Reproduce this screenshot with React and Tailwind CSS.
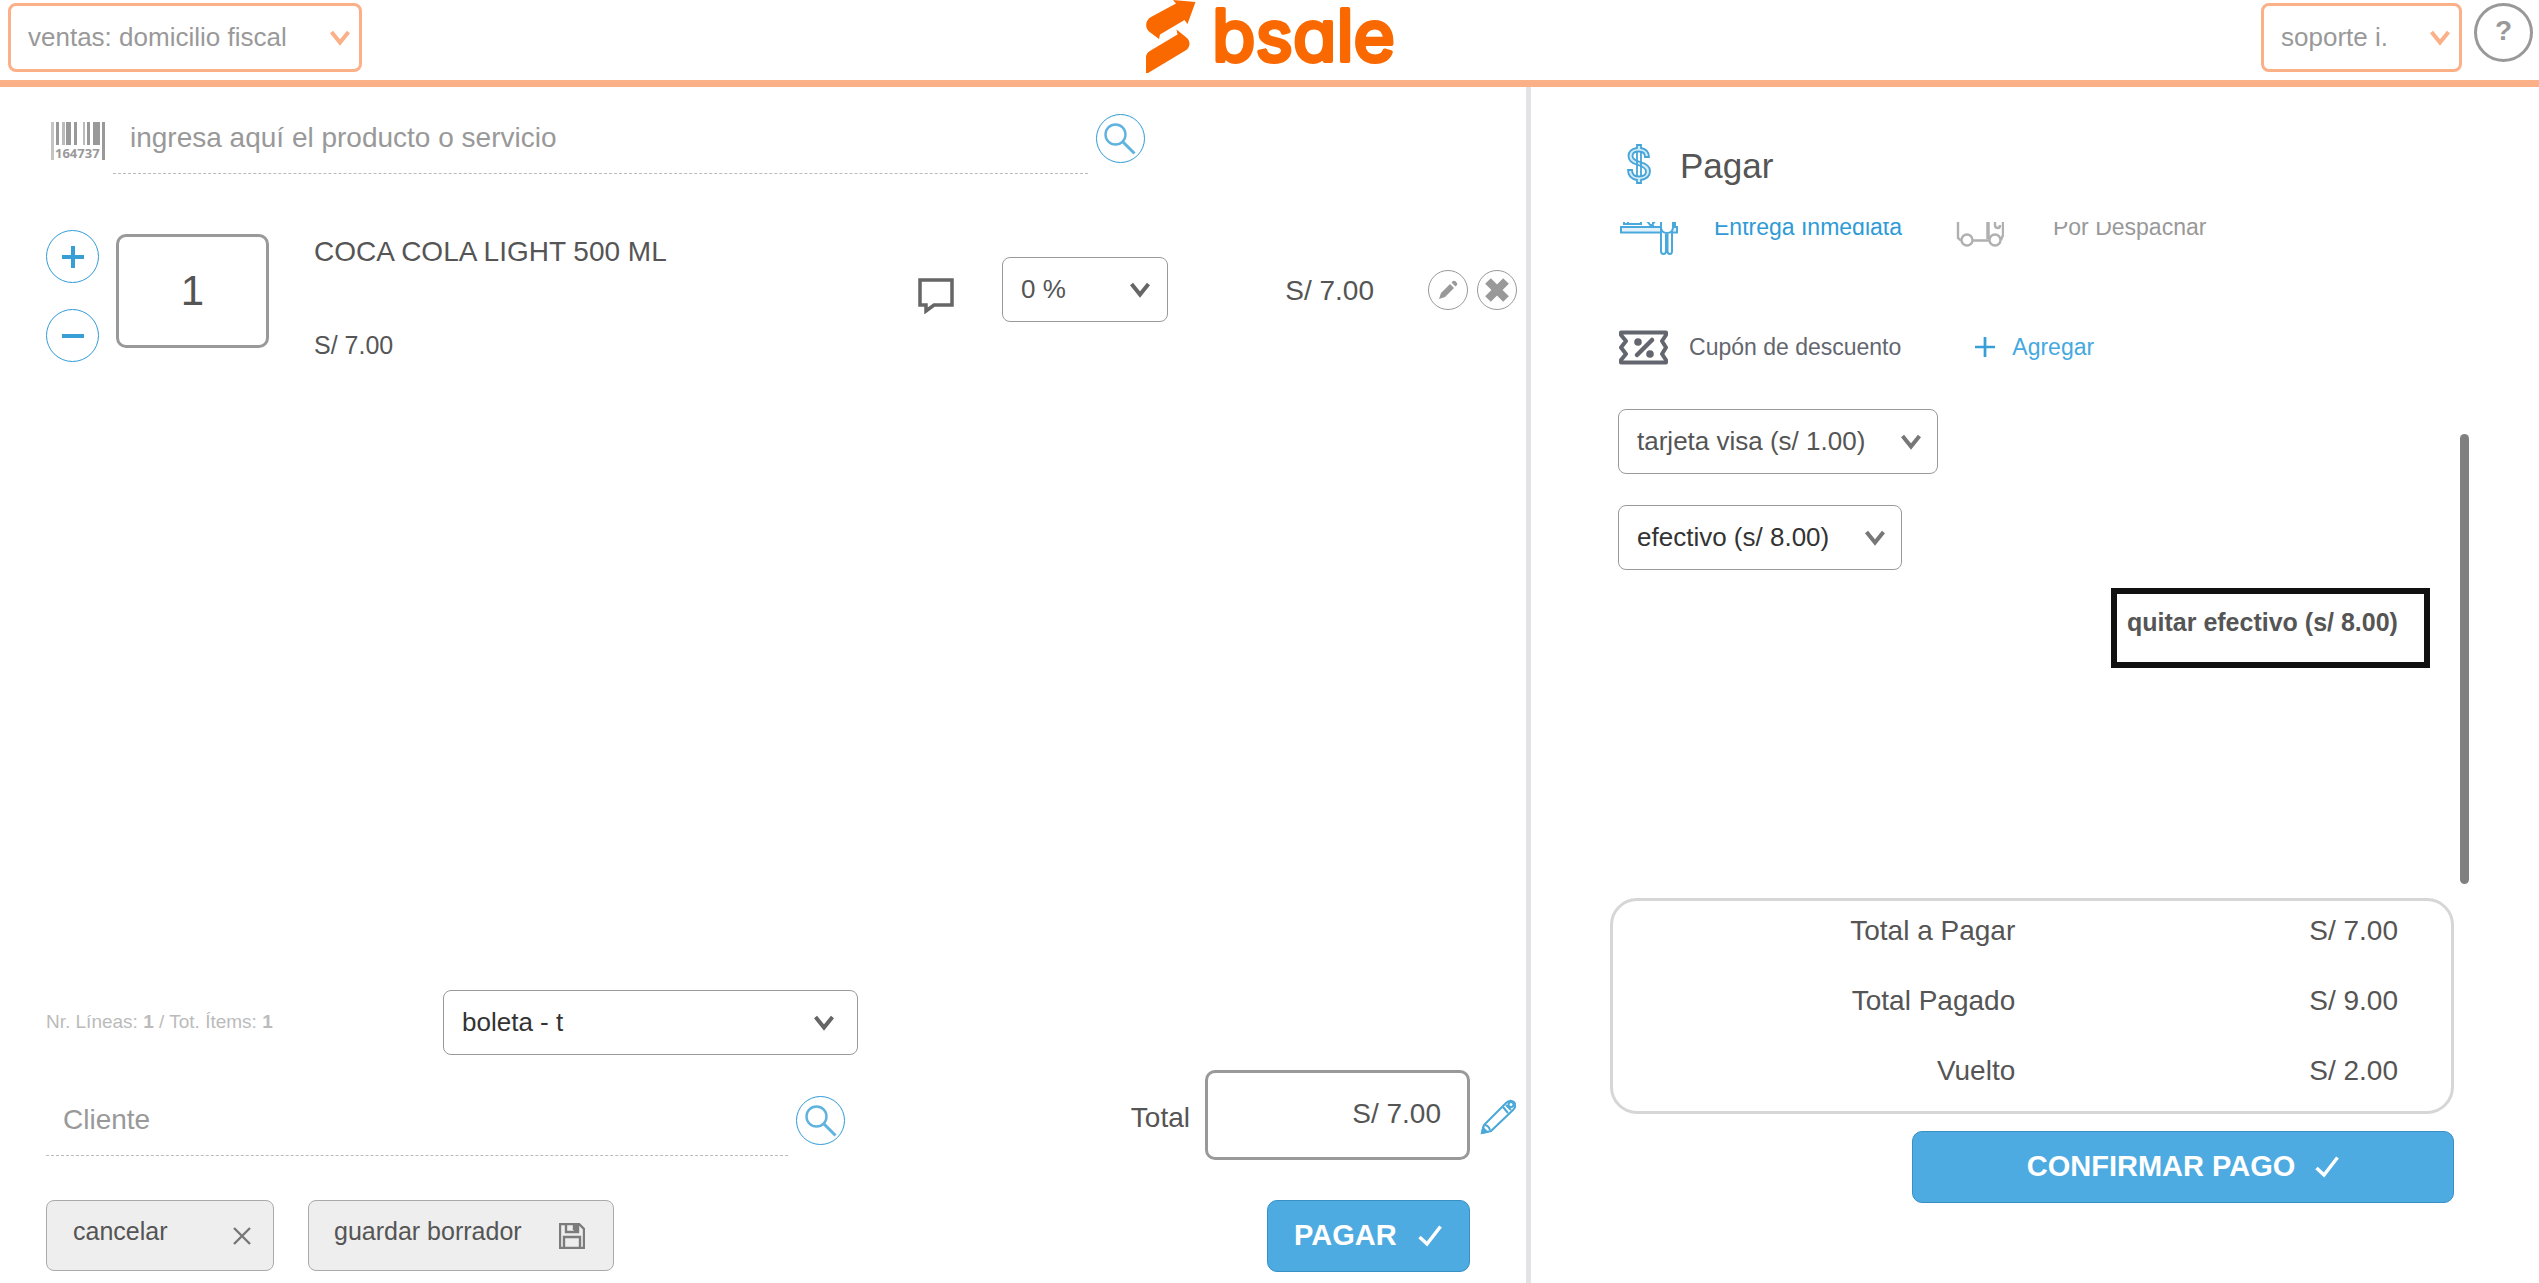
import React, { useState } from 'react';

// Logo
const Logo = () => (
  <svg width="248" height="80" viewBox="0 0 248 80" role="img" aria-label="bsale" fill="#fa6800" className="overflow-visible">
    <path d="M27 0 L49.500 2 L41.500 24 L38.500 20 L14 34.500 L13 39 L3 31.500 C-1.500 27 -0.500 20 5 17 L30 3.500 Z" />
    <path d="M30.500 29.500 L41 38 C45 42 44 48 39.500 50.500 L2 73 H0 V58 C0 54 2 52 5.500 50 L31.500 34.500 Z" />
    <text
      x="66"
      y="61"
      stroke="#fa6800"
      strokeWidth="4"
      strokeLinejoin="round"
      className="text-[71px] font-normal font-['Inter',sans-serif] [font-feature-settings:'cv11']"
    >
      bsale
    </text>
  </svg>
);

// Icons
const Chevron = ({ className }) => (
  <svg width="20" height="16" viewBox="0 0 20 16" fill="none" stroke="currentColor" strokeWidth="4" className={className}>
    <path d="M1.500 2 L10 12.500 L18.500 2" />
  </svg>
);

const SearchIcon = () => (
  <svg width="32" height="32" viewBox="0 0 32 32" fill="none" stroke="#5fb3df" strokeWidth="2.400">
    <circle cx="11.500" cy="11.500" r="10" />
    <path d="M18.500 18.500 L30.500 30.500" strokeWidth="3" />
  </svg>
);

const BarcodeIcon = () => (
  <svg width="54" height="42" viewBox="0 0 54 42" fill="#999" className="mt-2 shrink-0">
    <rect x="0" y="0" width="3" height="38" fill="#c4c4c4" />
    <rect x="5" y="0" width="3" height="23" />
    <rect x="11" y="0" width="3" height="23" fill="#bbb" />
    <rect x="15" y="0" width="5" height="23" />
    <rect x="23" y="0" width="3" height="23" />
    <rect x="32" y="0" width="2" height="23" fill="#bbb" />
    <rect x="36" y="0" width="3" height="23" />
    <rect x="42" y="0" width="7" height="23" />
    <rect x="51" y="0" width="3" height="38" />
    <text x="4" y="36" className="text-[13px] font-bold font-['Open_Sans',sans-serif]">164737</text>
  </svg>
);

const CommentIcon = () => (
  <svg width="36" height="36" viewBox="0 0 36 36" fill="none" stroke="#666" strokeWidth="3.500">
    <path d="M2 2 H34 V27 H16 L8 33 V27 H2 Z" />
  </svg>
);

const CheckIcon = () => (
  <svg width="24" height="22" viewBox="0 0 24 22" fill="none" stroke="#fff" strokeWidth="3.500">
    <path d="M1.500 12 L9 19 L22.500 1.500" />
  </svg>
);

const SmallPencil = () => (
  <svg width="20" height="20" viewBox="0 0 20 20" fill="#999">
    <path d="M1 19 L3 13 L12 4 L16 8 L7 17 Z M13.500 2.500 L15 1 Q17 0 19 3 Q19.500 4 19 5 L17.500 6.500 Z" />
  </svg>
);

const CrossIcon = () => (
  <svg width="24" height="24" viewBox="0 0 24 24" fill="none" stroke="#999" strokeWidth="8">
    <path d="M3 3 L21 21 M21 3 L3 21" />
  </svg>
);

const PencilIcon = () => (
  <svg width="36" height="36" viewBox="0 0 36 36" fill="none" stroke="#4aa8d8" strokeWidth="2">
    <path d="M2 34 L4 26 L26 4 Q30 0 34 3 Q37 7 33 11 L11 32 Z" />
    <path d="M5 26 Q9 27 10 31 M23 8 L28 14 M26 6 L31 11" />
    <circle cx="31" cy="5.500" r="2.500" />
    <path d="M2 34 L3 29 L7 33 Z" fill="#4aa8d8" />
  </svg>
);

const CloseIcon = () => (
  <svg width="18" height="18" viewBox="0 0 18 18" fill="none" stroke="#777" strokeWidth="2.400">
    <path d="M1 1 L17 17 M17 1 L1 17" />
  </svg>
);

const SaveIcon = () => (
  <svg width="26" height="26" viewBox="0 0 26 26" fill="none" stroke="#7c7c7c" strokeWidth="2.400">
    <path d="M1 1 H20 L25 6 V25 H1 Z" />
    <path d="M7 1 V9 H19 V1 M15 2 V7 M5 25 V14 H21 V25" />
    <path d="M16 2 H18 V7 H16 Z" fill="#7c7c7c" />
  </svg>
);

const DollarIcon = () => (
  <svg width="24" height="40" viewBox="0 0 24 40" fill="#d3eaf7" stroke="#45a5d8" strokeWidth="1.800">
    <path d="M10 4 V1 H14 V4 C19 5 22 8 22 13 H18 C18 9 15.500 7.500 12 7.500 C8 7.500 5.500 9 5.500 12 C5.500 15 8 16.500 13 18 C19 19.500 23 22 23 27 C23 32 19.500 35 14 36 V39 H10 V36 C4 35 1 32 1 26 H5 C5 31 8 32.500 12 32.500 C16 32.500 19 31 19 27.500 C19 24 16 22.500 11 21 C5 19.500 1.500 17 1.500 12 C1.500 7.500 5 4.500 10 4 Z" />
    <path d="M10 8 V32 M14 8 V32" />
  </svg>
);

const DeliveryIcon = () => (
  <svg width="58" height="60" viewBox="0 0 58 60" fill="none" stroke="#4aa9dc" strokeWidth="2">
    <path d="M1 30 H41 V35.500 H1 Z M53 30 H57 V35.500 H53" fill="#e3f2fa" />
    <path d="M4 10 V27 H10 M8 24 V27 H21 V10 M27 24 L31 29 L37 22 M33 24 V29" />
    <path d="M41 20 V30 Q41 36 47 36 Q53 36 53 30 V20 M55 20 V29" />
    <path d="M41 34 V54 Q41 57 43.500 57 Q46 57 46 54 V37 M47.500 37 V54 Q47.500 57 50 57 Q52 57 52 54 V34" />
  </svg>
);

const TruckIcon = () => (
  <svg width="48" height="60" viewBox="0 0 48 60" fill="none" stroke="#b0b0b0" strokeWidth="2.400">
    <path d="M2 8 V41 L5 43.500 M17 43.500 H34 M45 43 L47 38 V8" />
    <path d="M32 8 V42" strokeWidth="3.500" />
    <path d="M39 10 V28 Q39 31 42 31 Q44 31 44 28" />
    <circle cx="11" cy="43" r="5.500" />
    <circle cx="39" cy="43" r="5.500" />
  </svg>
);

const CouponIcon = () => (
  <svg width="50" height="35" viewBox="0 0 50 35" fill="none" stroke="#63666f" strokeWidth="4">
    <path d="M2 2.500 H47 V5 L43 11 L47 17.500 L43 24 L47 30 V32.500 H2 V30 L7 24 L2 17.500 L7 11 L2 5 Z" strokeLinejoin="round" />
    <path d="M18 25 L33 10" strokeWidth="4.500" strokeLinecap="round" />
    <circle cx="19" cy="12" r="3.800" fill="#63666f" stroke="none" />
    <circle cx="31" cy="24" r="3.800" fill="#63666f" stroke="none" />
  </svg>
);

const PlusIcon = ({ size, stroke }) => (
  <svg width={size} height={size} viewBox="0 0 22 22" fill="none" stroke="#379fd6" strokeWidth={stroke}>
    <path d="M11 0 V22 M0 11 H22" />
  </svg>
);

// Select with its own arrow
const Select = ({ label, options, className, arrow }) => (
  <div className="relative">
    <select
      aria-label={label}
      className={`appearance-none rounded-lg bg-white text-[26px] outline-none ${className}`}
    >
      {options.map((option) => (
        <option key={option}>{option}</option>
      ))}
    </select>
    <Chevron className={`pointer-events-none absolute top-1/2 -translate-y-1/2 ${arrow}`} />
  </div>
);

const SearchButton = ({ label }) => (
  <button
    aria-label={label}
    className="flex size-[49px] shrink-0 items-center justify-center rounded-full border border-[#2f9bd6]"
  >
    <SearchIcon />
  </button>
);

const Header = () => (
  <header className="grid h-[87px] grid-cols-[1fr_auto_1fr] items-start border-b-[7px] border-[#fbb088]">
    <div className="flex pt-[3px] pl-2">
      <Select
        label="Sucursal"
        options={['ventas: domicilio fiscal']}
        className="h-[69px] w-[354px] border-3 border-[#fbb088] pr-10 pl-[17px] text-[#999]"
        arrow="right-3 text-[#fbb088]"
      />
    </div>
    <Logo />
    <div className="flex justify-end gap-3 pt-[3px] pr-[6px]">
      <Select
        label="Usuario"
        options={['soporte i.']}
        className="h-[69px] w-[201px] border-3 border-[#fbb088] pr-10 pl-[17px] text-[#999]"
        arrow="right-3 text-[#fbb088]"
      />
      <button className="size-[59px] rounded-full border-3 border-[#999] pb-1 text-[28px] leading-none font-bold text-[#999]">
        ?
      </button>
    </div>
  </header>
);

const ItemRow = ({ item }) => {
  const [qty, setQty] = useState(item.qty);

  return (
    <div className="mt-14 flex items-start pr-[9px] pl-[46px]">
      {/* Quantity */}
      <div className="flex flex-col gap-[26px]">
        <button
          aria-label="Agregar uno"
          onClick={() => setQty(qty + 1)}
          className="flex size-[53px] items-center justify-center rounded-full border border-[#2f9bd6]"
        >
          <PlusIcon size={22} stroke={4} />
        </button>
        <button
          aria-label="Quitar uno"
          onClick={() => setQty(Math.max(1, qty - 1))}
          className="flex size-[53px] items-center justify-center rounded-full border border-[#2f9bd6]"
        >
          <span className="h-1 w-[22px] bg-[#379fd6]" />
        </button>
      </div>
      <input
        aria-label="Cantidad"
        value={qty}
        onChange={(e) => setQty(Number(e.target.value) || 1)}
        className="mt-1 ml-[17px] h-[114px] w-[153px] rounded-[10px] border-3 border-[#999] text-center text-[42px] outline-none"
      />

      {/* Name and unit price */}
      <div className="ml-[45px] flex h-[131px] flex-1 flex-col justify-between">
        <p className="text-[28px] leading-[44px]">{item.name}</p>
        <p className="text-[25px] leading-8">{item.price}</p>
      </div>

      {/* Discount, total and actions */}
      <div className="flex h-[119px] items-center">
        <button aria-label="Comentario" className="mt-3 mr-12">
          <CommentIcon />
        </button>
        <Select
          label="Descuento"
          options={['0 %']}
          className="h-[65px] w-[166px] border border-[#999] pr-10 pl-[18px]"
          arrow="right-[18px] text-[#666]"
        />
        <span className="w-[206px] pt-[2px] text-right text-[28px]">{item.price}</span>
        <button aria-label="Editar" className="ml-[54px] flex size-10 items-center justify-center rounded-full border border-[#999]">
          <SmallPencil />
        </button>
        <button aria-label="Eliminar" className="ml-[9px] flex size-10 items-center justify-center rounded-full border border-[#999]">
          <CrossIcon />
        </button>
      </div>
    </div>
  );
};

const SalePanel = () => (
  <main className="flex w-[60.3%] flex-col border-r-[5px] border-[#e2e3e5] pt-4 pb-[11px]">
    {/* Product search */}
    <div className="flex w-3/4 items-center gap-2 pl-[51px]">
      <BarcodeIcon />
      <input
        aria-label="Producto o servicio"
        placeholder="ingresa aquí el producto o servicio"
        className="h-[71px] min-w-0 flex-1 border-b border-dashed border-[#bbb] pl-[17px] text-[28px] outline-none placeholder:text-[#999]"
      />
      <SearchButton label="Buscar producto" />
    </div>

    <ItemRow item={{ name: 'COCA COLA LIGHT 500 ML', price: 'S/ 7.00', qty: 1 }} />

    {/* Document type */}
    <div className="mt-auto flex items-center pl-[46px]">
      <p className="w-[397px] text-[19px] text-[#bbb]">
        Nr. Líneas: <b>1</b> / Tot. Ítems: <b>1</b>
      </p>
      <Select
        label="Documento"
        options={['boleta - t']}
        className="h-[65px] w-[415px] border border-[#999] pr-12 pl-[18px] text-[#333]"
        arrow="right-6 text-[#666]"
      />
    </div>

    {/* Client and total */}
    <div className="mt-[15px] flex items-end justify-between pr-[10px] pl-[46px]">
      <div className="flex w-[799px] items-center gap-2 pb-1">
        <input
          aria-label="Cliente"
          placeholder="Cliente"
          className="h-[71px] min-w-0 flex-1 border-b border-dashed border-[#bbb] pl-[17px] text-[28px] outline-none placeholder:text-[#999]"
        />
        <SearchButton label="Buscar cliente" />
      </div>
      <div className="flex items-center text-[28px]">
        <label htmlFor="total" className="mr-[15px] pt-[6px]">Total</label>
        <input
          id="total"
          readOnly
          value="S/ 7.00"
          className="h-[90px] w-[265px] rounded-[10px] border-3 border-[#999] pr-[26px] pb-[2px] text-right outline-none"
        />
        <button aria-label="Editar total" className="ml-[10px] pt-1">
          <PencilIcon />
        </button>
      </div>
    </div>

    {/* Actions */}
    <div className="mt-10 flex pr-14 pl-[46px] text-[25px]">
      <button className="flex h-[71px] w-[228px] items-center justify-between rounded-lg border border-[#aaa] bg-[#eee] pr-[22px] pl-[26px]">
        <span className="pb-2">cancelar</span>
        <CloseIcon />
      </button>
      <button className="ml-[34px] flex h-[71px] w-[306px] items-center justify-between rounded-lg border border-[#aaa] bg-[#eee] pr-7 pl-[25px]">
        <span className="pb-2">guardar borrador</span>
        <SaveIcon />
      </button>
      <button className="ml-auto flex h-[72px] w-[203px] items-center justify-between rounded-[10px] border border-[#3a8fc4] bg-[#4dabe1] pr-[27px] pl-[26px] text-[29px] font-bold text-white">
        PAGAR
        <CheckIcon />
      </button>
    </div>
  </main>
);

const totals = [
  { label: 'Total a Pagar', value: 'S/ 7.00' },
  { label: 'Total Pagado', value: 'S/ 9.00' },
  { label: 'Vuelto', value: 'S/ 2.00' },
];

const PayPanel = () => (
  <aside className="flex flex-1 flex-col pr-[85px] pb-20 pl-[79px]">
    <div className="flex h-[135px] items-start gap-[29px] pt-[54px] pl-[17px]">
      <div className="pt-[3px]">
        <DollarIcon />
      </div>
      <h1 className="text-[35px] leading-[50px]">Pagar</h1>
    </div>

    {/* Scrolled list of payment options */}
    <div className="-mr-[15px] mb-[14px] flex flex-1 overflow-hidden">
      <div className="flex flex-1 flex-col items-start pl-2 text-[23px]">
        <div className="-mt-[25px] flex pl-[2px]">
          <button className="flex h-[60px] items-center gap-9 text-[#2f9bd6]">
            <DeliveryIcon />
            Entrega Inmediata
          </button>
          <button className="ml-[54px] flex h-[60px] items-center gap-[49px] text-[#999]">
            <TruckIcon />
            Por Despachar
          </button>
        </div>

        <div className="mt-[70px] flex h-10 items-center pl-px">
          <CouponIcon />
          <span className="ml-5 text-[#63666f]">Cupón de descuento</span>
          <button className="ml-[74px] flex items-center gap-[17px] text-[#45a9e0]">
            <PlusIcon size={20} stroke={3} />
            Agregar
          </button>
        </div>

        <div className="mt-[42px]">
          <Select
            label="Tarjeta"
            options={['tarjeta visa (s/ 1.00)']}
            className="h-[65px] w-[320px] border border-[#999] pr-12 pl-[18px]"
            arrow="right-[17px] text-[#777]"
          />
        </div>
        <div className="mt-[31px]">
          <Select
            label="Efectivo"
            options={['efectivo (s/ 8.00)']}
            className="h-[65px] w-[284px] border border-[#999] pr-12 pl-[18px] text-[#333]"
            arrow="right-[17px] text-[#777]"
          />
        </div>
        <button className="mt-[18px] mr-[30px] h-20 w-[319px] self-end border-6 border-[#111] pb-[10px] pl-[10px] text-left text-[25px] font-bold">
          quitar efectivo (s/ 8.00)
        </button>
      </div>
      <div className="h-[68%] w-[9px] self-end rounded-full bg-[#808080]" />
    </div>

    {/* Totals */}
    <div className="rounded-[27px] border-3 border-[#d6d6d6]">
      <table className="w-full text-right text-[28px]">
        <tbody>
          {totals.map((row) => (
            <tr key={row.label} className="h-[70px]">
              <th scope="row" className="w-[48%] pb-[10px] text-right font-normal">{row.label}</th>
              <td className="pr-[53px] pb-[10px]">{row.value}</td>
            </tr>
          ))}
        </tbody>
      </table>
    </div>
    <button className="mt-[17px] flex h-[72px] w-[542px] items-center justify-center gap-5 self-end rounded-[10px] border border-[#3a8fc4] bg-[#4dabe1] text-[29px] font-bold text-white">
      CONFIRMAR PAGO
      <CheckIcon />
    </button>
  </aside>
);

const App = () => {
  return (
    <div className="flex min-h-screen flex-col bg-white font-['Liberation_Sans',Arial,sans-serif] text-[#555]">
      <Header />
      <div className="flex flex-1">
        <SalePanel />
        <PayPanel />
      </div>
    </div>
  );
};

export default App;
